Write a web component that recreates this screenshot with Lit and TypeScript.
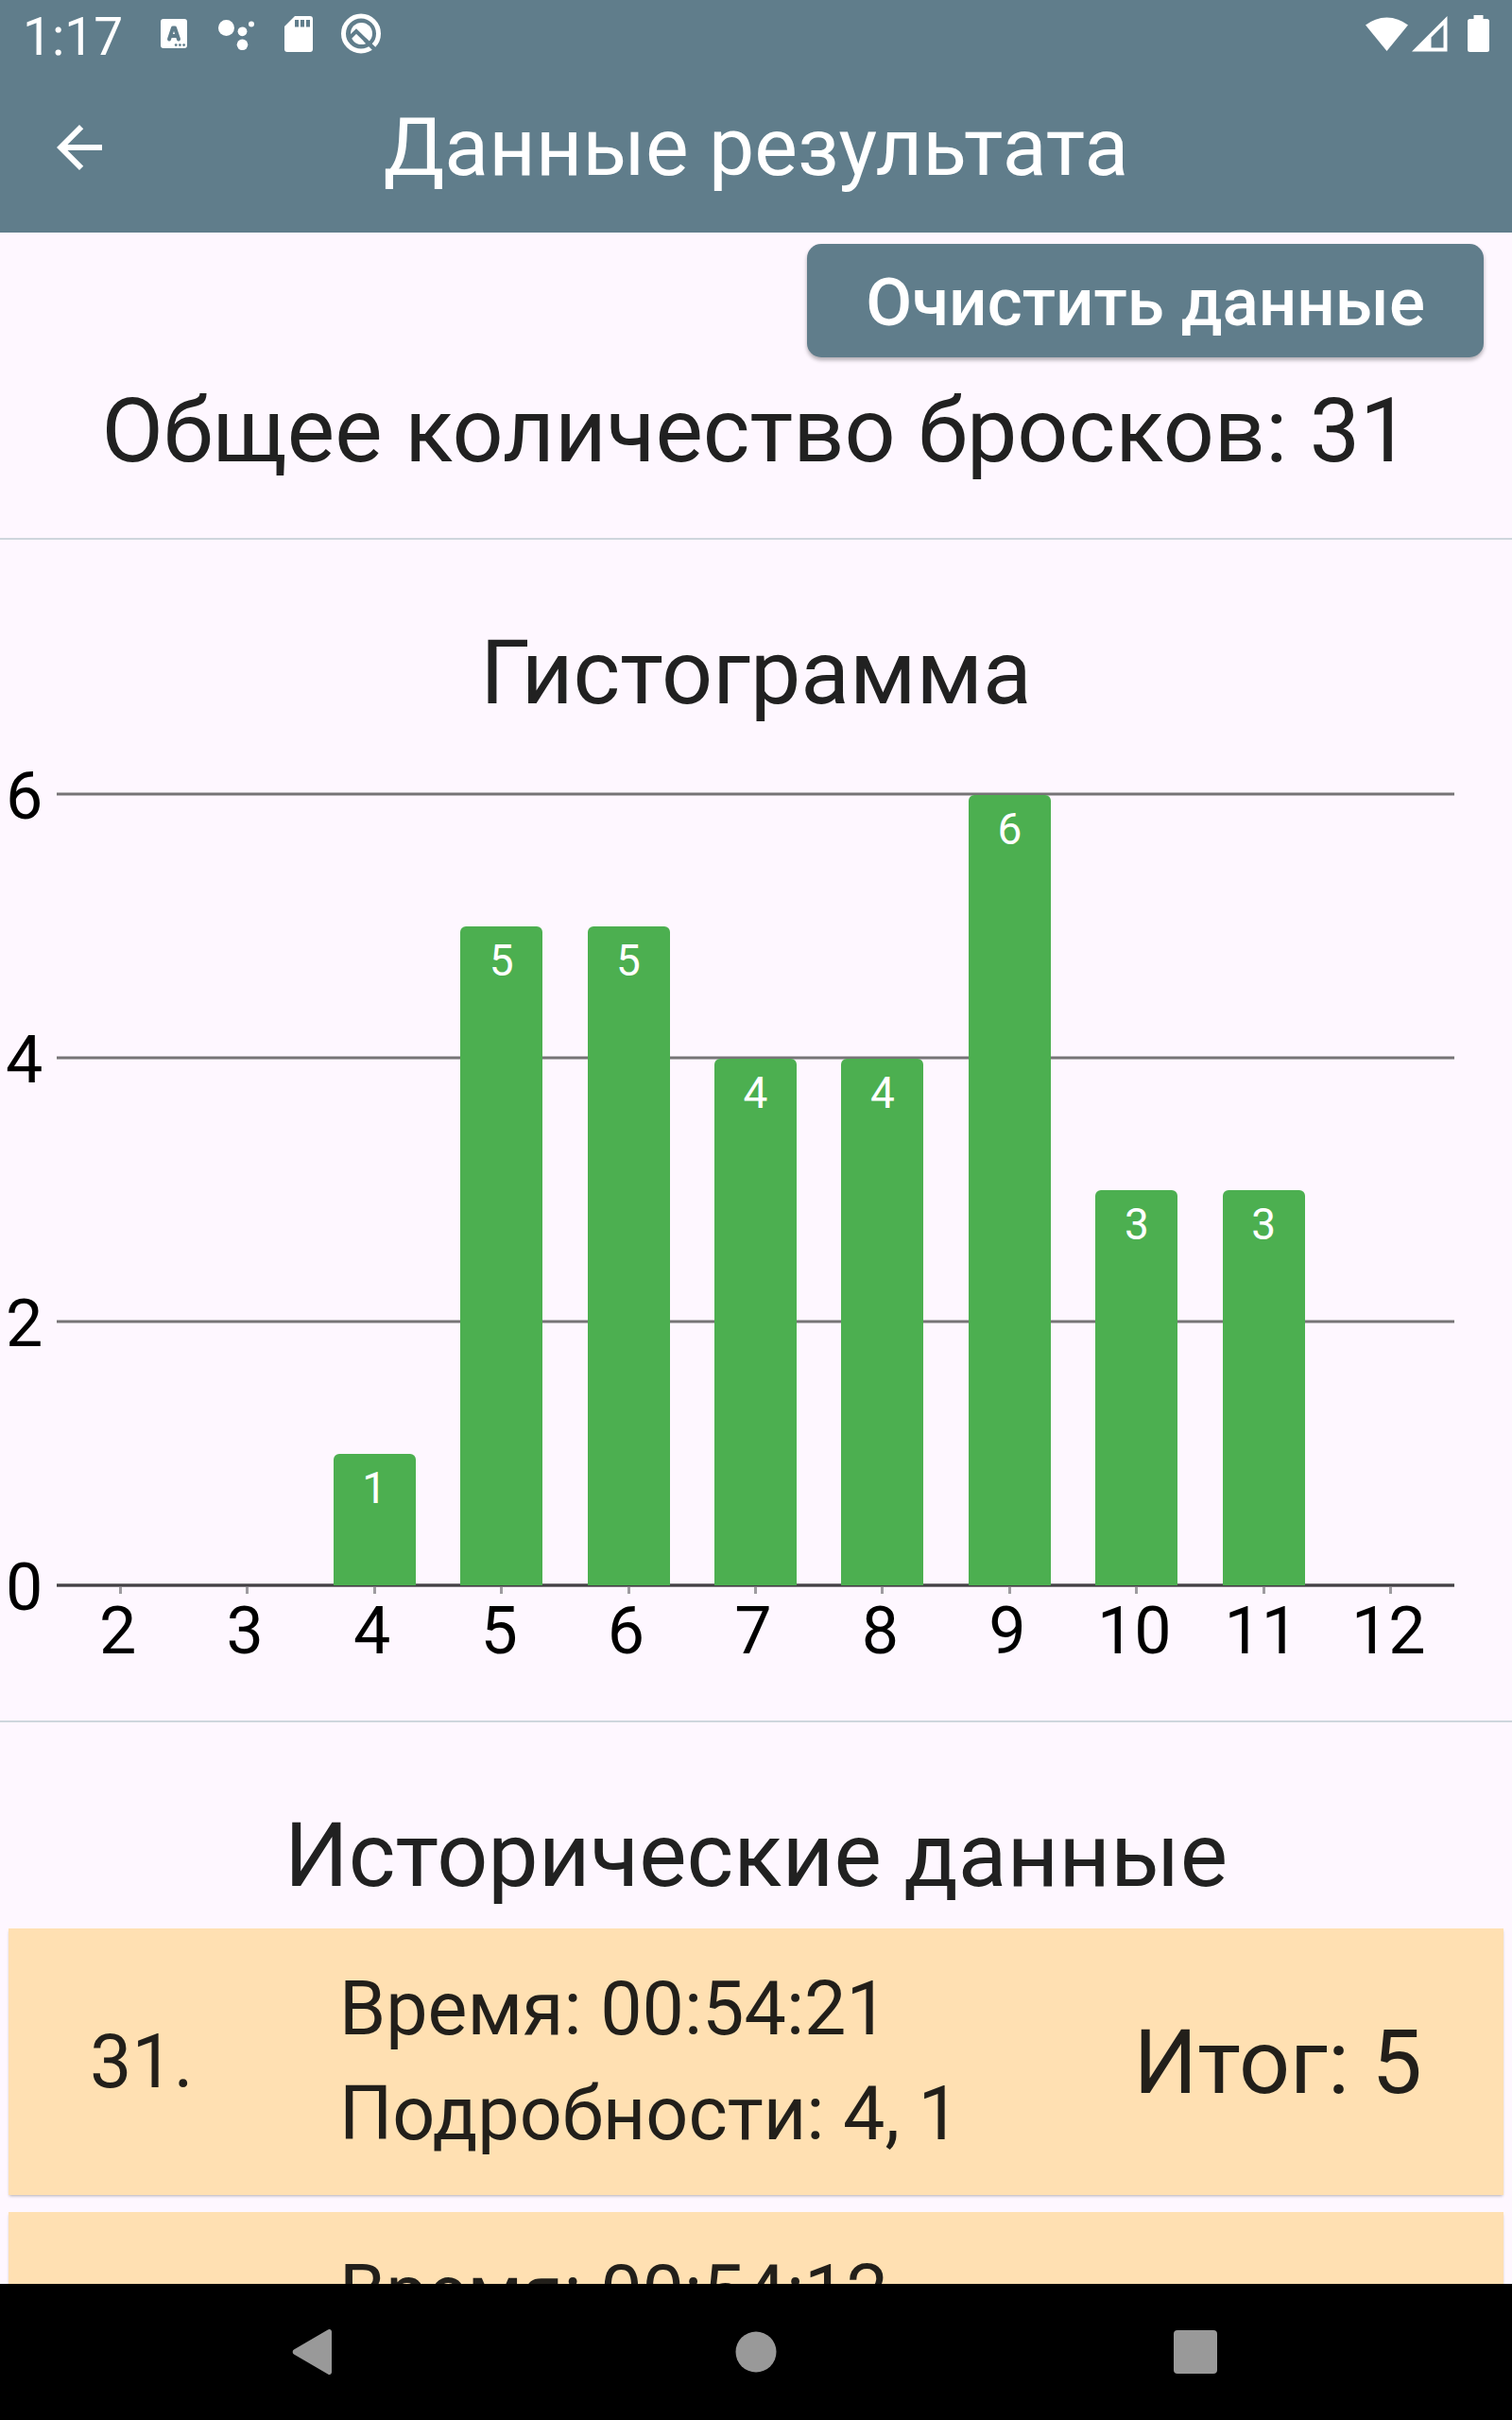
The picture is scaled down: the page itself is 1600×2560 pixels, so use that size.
import { LitElement, html, css, svg } from "lit";
import { customElement, property } from "lit/decorators.js";

interface Roll {
  index: number;
  time: string;
  details: string;
  total: number;
}

const COUNTS: Array<[number, number]> = [
  [2, 0], [3, 0], [4, 1], [5, 5], [6, 5], [7, 4],
  [8, 4], [9, 6], [10, 3], [11, 3], [12, 0],
];

const ROLLS: Roll[] = [
  { index: 31, time: "00:54:21", details: "4, 1", total: 5 },
  { index: 30, time: "00:54:12", details: "5, 4", total: 9 },
];

@customElement("status-bar")
class StatusBar extends LitElement {
  static styles = css`
    :host { display: block; }
    .bar {
      height: 74px;
      padding: 0 24px;
      display: flex;
      justify-content: space-between;
      color: #fff;
      font-size: 55px;
      line-height: 78px;
    }
    .side { display: flex; align-items: flex-start; }
    .time { margin-right: 30px; }
    .icons { display: block; margin-top: 12px; fill: #fff; }
    .cut { fill: #607d8b; }
    .cut-line { fill: none; stroke: #607d8b; }
    .ring { fill: none; stroke: #fff; stroke-width: 5; }
  `;

  render() {
    return html`
      <div class="bar">
        <div class="side">
          <span class="time">1:17</span>
          <svg class="icons" width="250" height="48" viewBox="160 12 250 48" aria-hidden="true">
            ${svg`
              <rect x="170" y="20" width="28" height="31" rx="3"/>
              <path class="cut-line" stroke-width="4" stroke-linecap="round" stroke-linejoin="round" d="M179 41.500L183 29.500h2L189 41.500M181 38h6"/>
              <circle class="cut" cx="186.200" cy="47.600" r="1.400"/><circle class="cut" cx="190.400" cy="47.600" r="1.400"/><circle class="cut" cx="194.600" cy="47.600" r="1.400"/>
              <circle cx="239.500" cy="29.500" r="8.500"/><circle cx="256.500" cy="33.300" r="4.900"/>
              <circle cx="266" cy="25.600" r="3"/><circle cx="256.500" cy="47.300" r="5.800"/>
              <path d="M312 17h16a3 3 0 0 1 3 3v32a3 3 0 0 1-3 3h-24a3 3 0 0 1-3-3V28z"/>
              <path class="cut" d="M312 21h4v7.500h-4zM318 21h4v7.500h-4zM324 21h4v7.500h-4z"/>
              <circle class="ring" cx="382" cy="35.500" r="18.500"/>
              <circle cx="382.500" cy="35.500" r="11.500"/>
              <path class="cut-line" stroke-width="4" d="M370.500 39.500L377 33L396 51.500"/>
              <path class="cut-line" stroke-width="4" d="M386 42L398 54"/>
            `}
          </svg>
        </div>
        <svg class="icons" width="131" height="48" viewBox="1445 12 131 48" aria-hidden="true">
          <path d="M1467.500 54L1445 26.500a36 36 0 0 1 45 0z"/>
          <path fill-rule="evenodd" d="M1531.500 17v37.500h-37.500zM1527.500 26.500L1514.500 39.500V50.500h13z"/>
          <path d="M1559.500 16h10v4h4a2.500 2.500 0 0 1 2.500 2.500v30a2.500 2.500 0 0 1-2.500 2.500h-18a2.500 2.500 0 0 1-2.500-2.500v-30a2.500 2.500 0 0 1 2.500-2.500h4z"/>
        </svg>
      </div>
    `;
  }
}

@customElement("roll-histogram")
class RollHistogram extends LitElement {
  @property({ attribute: false }) counts: Array<[number, number]> = [];
  @property({ type: Number }) max = 6;

  static styles = css`
    :host { display: block; }
    .chart {
      display: grid;
      grid-template-columns: 60px 1fr;
      padding-right: 61px;
      color: #000;
      font-size: 70px;
      line-height: 80px;
    }
    .scale {
      display: flex;
      flex-direction: column;
      justify-content: space-between;
      margin: -36px 0 -40px;
      padding-left: 6px;
    }
    .plot {
      box-sizing: border-box;
      height: 841px;
      padding: 3px 0 2px;
      display: grid;
      grid-template-columns: repeat(11, 1fr);
      background:
        linear-gradient(to bottom, #7f7b80 0 1px, #434144 1px 3px, #7f7b80 3px) left bottom / 100% 4px no-repeat,
        repeating-linear-gradient(to bottom, #b9b5ba 0 1px, #767476 1px 3px, #b9b5ba 3px 4px, transparent 4px 279px);
    }
    .slot { display: flex; align-items: flex-end; justify-content: center; }
    .column {
      box-sizing: border-box;
      width: 87px;
      border-radius: 6px 6px 0 0;
      background: #4caf50;
      color: #fff;
      font-size: 46px;
      line-height: 54px;
      padding-top: 9px;
      text-align: center;
    }
    .labels {
      grid-column: 2;
      display: grid;
      grid-template-columns: repeat(11, 1fr);
      line-height: 78px;
    }
    .label { display: flex; flex-direction: column; align-items: center; }
    .tick { width: 3px; height: 7px; background: #9e9ba0; }
    .value { padding-right: 5px; }
  `;

  render() {
    return html`
      <div class="chart">
        <div class="scale">${[6, 4, 2, 0].map((n) => html`<span>${n}</span>`)}</div>
        <div class="plot">
          ${this.counts.map(([, n]) => html`
            <div class="slot">
              ${n ? html`<div class="column" style="height:${(n / this.max) * 100}%">${n}</div>` : ""}
            </div>`)}
        </div>
        <div class="labels">
          ${this.counts.map(([face]) => html`
            <div class="label"><i class="tick"></i><span class="value">${face}</span></div>`)}
        </div>
      </div>
    `;
  }
}

@customElement("roll-card")
class RollCard extends LitElement {
  @property({ attribute: false }) roll!: Roll;

  static styles = css`
    :host { display: block; }
    .card {
      display: grid;
      grid-template-columns: 264px 1fr auto;
      align-items: center;
      padding: 30px 86px;
      background: #ffe0b2;
      color: #221f1a;
      font-size: 79px;
      line-height: 111px;
      box-shadow: 0 2px 3px -1px rgba(0, 0, 0, 0.3);
    }
    .total { font-size: 95px; }
  `;

  render() {
    const { index, time, details, total } = this.roll;
    return html`
      <article class="card">
        <span>${index}.</span>
        <div>
          <div>Время: ${time}</div>
          <div>Подробности: ${details}</div>
        </div>
        <span class="total">Итог: ${total}</span>
      </article>
    `;
  }
}

@customElement("app-root")
class AppRoot extends LitElement {
  static styles = css`
    :host {
      display: flex;
      flex-direction: column;
      height: 100vh;
      background: #fef7ff;
      color: #212121;
      font-family: Roboto, "Noto Sans", sans-serif;
      overflow: hidden;
    }
    .header { flex: none; background: #607d8b; color: #fff; }
    .toolbar {
      display: grid;
      grid-template-columns: 72px 1fr 72px;
      align-items: center;
      height: 172px;
      padding: 0 48px;
      box-sizing: border-box;
    }
    button { font: inherit; border: 0; padding: 0; cursor: pointer; }
    .back { height: 72px; margin-bottom: 8px; background: none; color: inherit; }
    .back svg { display: block; fill: #fff; }
    .title {
      margin: 0;
      font-size: 86px;
      font-weight: 400;
      line-height: 100px;
      padding-bottom: 8px;
      text-align: center;
      white-space: nowrap;
    }
    .content { flex: 1; min-height: 0; overflow: hidden; }
    .actions { display: flex; justify-content: flex-end; padding: 12px 30px 0; }
    .clear {
      height: 120px;
      padding: 3px 62px 0;
      border-radius: 15px;
      background: #607d8b;
      color: #fff;
      font-size: 71px;
      font-weight: 500;
      box-shadow: 0 3px 4px rgba(0, 0, 0, 0.3);
    }
    .heading {
      margin: 0;
      font-size: 95px;
      font-weight: 400;
      line-height: 132px;
      text-align: center;
      white-space: nowrap;
    }
    .summary { padding: 12px 0 47px; border-bottom: 2px solid #ced6dd; }
    .histogram { padding: 75px 0 56px; border-bottom: 2px solid #ced6dd; }
    .histogram .heading { margin-bottom: 60px; }
    .history { padding: 75px 9px 0; }
    .history .heading { margin-bottom: 11px; }
    .list { display: flex; flex-direction: column; gap: 18px; }
    .navbar {
      flex: none;
      display: flex;
      justify-content: space-around;
      align-items: center;
      height: 144px;
      padding: 0 100px;
      background: #000;
    }
    .nav { width: 72px; height: 72px; background: none; }
    .nav svg { display: block; fill: #999; }
  `;

  render() {
    return html`
      <header class="header">
        <status-bar></status-bar>
        <div class="toolbar">
          <button class="back" aria-label="Назад">
            <svg width="72" height="72" viewBox="0 0 24 24"><path d="M20 11H7.830l5.590-5.590L12 4l-8 8 8 8 1.410-1.410L7.830 13H20v-2z"/></svg>
          </button>
          <h1 class="title">Данные результата</h1>
        </div>
      </header>
      <main class="content">
        <div class="actions"><button class="clear">Очистить данные</button></div>
        <section class="summary"><h2 class="heading">Общее количество бросков: 31</h2></section>
        <section class="histogram">
          <h2 class="heading">Гистограмма</h2>
          <roll-histogram .counts=${COUNTS} .max=${6}></roll-histogram>
        </section>
        <section class="history">
          <h2 class="heading">Исторические данные</h2>
          <div class="list">${ROLLS.map((r) => html`<roll-card .roll=${r}></roll-card>`)}</div>
        </section>
      </main>
      <nav class="navbar">
        <button class="nav" aria-label="Назад">
          <svg width="72" height="72" viewBox="0 0 72 72"><path d="M54 14.500v43a2.500 2.500 0 0 1-4 2L14 38.500a3 3 0 0 1 0-5L50 12.500a2.500 2.500 0 0 1 4 2z"/></svg>
        </button>
        <button class="nav" aria-label="Домой">
          <svg width="72" height="72" viewBox="0 0 72 72"><circle cx="36" cy="36" r="21.500"/></svg>
        </button>
        <button class="nav" aria-label="Обзор">
          <svg width="72" height="72" viewBox="0 0 72 72"><rect x="11" y="13" width="46" height="46" rx="4"/></svg>
        </button>
      </nav>
    `;
  }
}
